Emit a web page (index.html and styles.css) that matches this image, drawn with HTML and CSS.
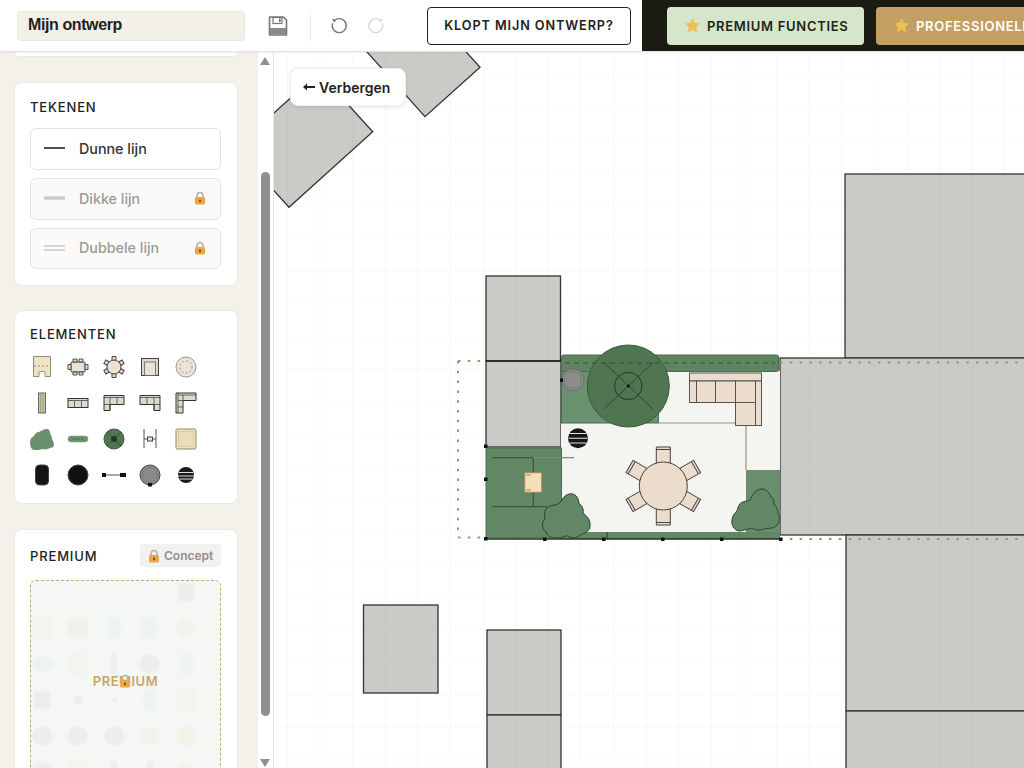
FILE: index.html
```html
<!DOCTYPE html>
<html lang="nl">
<head>
<meta charset="utf-8">
<title>Mijn ontwerp</title>
<link rel="stylesheet" href="styles.css">
</head>
<body>
<svg class="defs" width="0" height="0" aria-hidden="true">
  <defs>
    <symbol id="lock" viewBox="0 0 12 14">
      <path d="M3 7V4.500a3 3 0 0 1 6 0V7" fill="none" stroke="#b9b4aa" stroke-width="1.600"/>
      <rect x="1" y="6" width="10" height="7.500" rx="1.400" fill="#eda54a"/>
      <rect x="5.200" y="8.400" width="1.600" height="2.800" rx=".7" fill="#6b3d16"/>
    </symbol>
    <symbol id="star" viewBox="0 0 16 16">
      <path d="M8 1l2.100 4.500 4.900.7-3.500 3.400.8 4.900L8 12.200l-4.300 2.300.8-4.900L1 6.200l4.900-.7z" fill="#eebf55" stroke="#eebf55" stroke-linejoin="round"/>
    </symbol>
  </defs>
</svg>

<header class="topbar">
  <div class="name-field">Mijn ontwerp</div>
  <button class="icon-btn save" aria-label="Opslaan">
    <svg width="22" height="22" viewBox="0 0 22 22"><path d="M2.500 2h14l3 3v15h-17z" fill="#fff" stroke="#777" stroke-width="1.600" stroke-linejoin="round"/><rect x="6" y="2.500" width="9" height="6" fill="#fff" stroke="#777" stroke-width="1.200"/><rect x="12" y="3.500" width="1.600" height="3.600" fill="#777"/><rect x="3" y="13" width="16" height="6.500" fill="#8a8a8a"/></svg>
  </button>
  <div class="divider"></div>
  <button class="icon-btn undo" aria-label="Ongedaan maken">
    <svg width="20" height="20" viewBox="0 0 20 20"><path d="M6.600 3.600a7 7 0 1 1-3 3.600" fill="none" stroke="#777" stroke-width="1.400"/><path d="M3 3l4.400.2-1.800 3.600z" fill="#777"/></svg>
  </button>
  <button class="icon-btn redo" aria-label="Opnieuw">
    <svg width="20" height="20" viewBox="0 0 20 20"><path d="M13.400 3.600a7 7 0 1 0 3 3.600" fill="none" stroke="#d9d9d9" stroke-width="1.400"/><path d="M17 3l-4.400.2 1.800 3.600z" fill="#d9d9d9"/></svg>
  </button>
  <button class="check-btn">KLOPT MIJN ONTWERP?</button>
  <div class="promo">
    <button class="promo-btn light"><svg class="star"><use href="#star"/></svg>PREMIUM FUNCTIES</button>
    <button class="promo-btn gold"><svg class="star"><use href="#star"/></svg>PROFESSIONELE FUNCTIES</button>
  </div>
</header>

<main class="workspace">
  <aside class="sidebar">
    <section class="card card-clipped"></section>

    <section class="card tools">
      <h2 class="card-title">TEKENEN</h2>
      <div class="tool-row">
        <svg class="line-icon" viewBox="0 0 22 8"><line x1="0" y1="4" x2="21" y2="4" stroke="#111" stroke-width="1.500"/></svg>
        <span>Dunne lijn</span>
      </div>
      <div class="tool-row locked">
        <svg class="line-icon" viewBox="0 0 22 8"><line x1="0" y1="4" x2="21" y2="4" stroke="#c9c9c9" stroke-width="3.400"/></svg>
        <span>Dikke lijn</span>
        <svg class="lock"><use href="#lock"/></svg>
      </div>
      <div class="tool-row locked">
        <svg class="line-icon" viewBox="0 0 22 8"><path d="M0 2h21M0 6h21" stroke="#c9c9c9" stroke-width="1.400"/></svg>
        <span>Dubbele lijn</span>
        <svg class="lock"><use href="#lock"/></svg>
      </div>
    </section>

    <section class="card elements">
      <h2 class="card-title">ELEMENTEN</h2>
      <div class="icon-grid">
        <svg viewBox="0 0 24 24"><path d="M3.500 1.500h17v20h-5.500v-3.500q0-1.500-1.500-1.500h-3q-1.500 0-1.500 1.500v3.500h-5.500z" fill="#f2e2c4" stroke="#8f8f86"/><path d="M4 11h16" stroke="#a08a66" stroke-dasharray="2 2"/></svg>
        <svg viewBox="0 0 24 24"><rect x="5" y="7" width="14" height="10" rx="1" fill="#ece2d4" stroke="#444"/><path d="M7 4h4v3H7zM13 4h4v3h-4zM7 17h4v3H7zM13 17h4v3h-4zM2 9.500h3v5H2zM19 9.500h3v5h-3z" fill="#ddd7ca" stroke="#444" stroke-width=".9"/></svg>
        <svg viewBox="0 0 24 24"><path d="M10 1.500h4v4h-4zM10 18.500h4v4h-4z" fill="#e5ddd0" stroke="#444"/><path d="M10 1.500h4v4h-4zM10 18.500h4v4h-4z" transform="rotate(60 12 12)" fill="#e5ddd0" stroke="#444"/><path d="M10 1.500h4v4h-4zM10 18.500h4v4h-4z" transform="rotate(120 12 12)" fill="#e5ddd0" stroke="#444"/><circle cx="12" cy="12" r="7" fill="#ece2d4" stroke="#444"/></svg>
        <svg viewBox="0 0 24 24"><rect x="3.500" y="3.500" width="17" height="17" fill="#d9d6cb" stroke="#444"/><rect x="6.500" y="7" width="11" height="13.500" fill="#e8e3d8" stroke="#555" stroke-width=".7"/></svg>
        <svg viewBox="0 0 24 24"><circle cx="12" cy="12" r="10" fill="#ece3d6" stroke="#999"/><circle cx="12" cy="12" r="6" fill="none" stroke="#8a7c66" stroke-dasharray="1.500 2.500"/></svg>

        <svg viewBox="0 0 24 24"><rect x="8.500" y="2" width="7" height="20" fill="#c8c8a6" stroke="#666"/><path d="M10.800 2v20M13.200 2v20" stroke="#8a8a6c" stroke-width=".7"/></svg>
        <svg viewBox="0 0 24 24"><rect x="2" y="7.500" width="20" height="9" fill="#ddd9cd" stroke="#333"/><path d="M2 9.500h20M8.500 9.500v7M15.500 9.500v7" stroke="#333" stroke-width=".7"/></svg>
        <svg viewBox="0 0 24 24"><path d="M2 4.500h20v9h-14v6H2z" fill="#ddd9cd" stroke="#333"/><path d="M2 6.500h20M8 6.500v13M15 6.500v7M2 13.500h6" stroke="#333" stroke-width=".7"/></svg>
        <svg viewBox="0 0 24 24"><path d="M2 4.500h20v15h-6v-6H2z" fill="#ddd9cd" stroke="#333"/><path d="M2 6.500h20M16 6.500v13M9 6.500v7M16 13.500h6" stroke="#333" stroke-width=".7"/></svg>
        <svg viewBox="0 0 24 24"><path d="M2 2h20v7.500h-13v12.500H2z" fill="#ddd9cd" stroke="#333"/><path d="M4 2v20M4 4h18M9 4v5.500M4 9.500h5M4 16h5" stroke="#333" stroke-width=".7"/></svg>

        <svg viewBox="0 0 24 24"><path d="M0 15c0-3 2-5 4-6 1-2 2-4 5-4 2-1 5-3 8-3 2 0 3 2 3 4 1 2 2 4 2 6 1 2 2 4 2 6 0 2-2 3-4 3-2 1-5 2-7 1-3 1-6 1-8 1-3 0-5-2-5-8z" fill="#6c8f70"/></svg>
        <svg viewBox="0 0 24 24"><rect x="2" y="9" width="20" height="6" rx="3" fill="#6c8f70" stroke="#8aa48c" stroke-width=".6"/><path d="M6 12h12" stroke="#4c6a50" stroke-dasharray="2 1"/></svg>
        <svg viewBox="0 0 24 24"><circle cx="12" cy="12" r="10" fill="#4f7551" stroke="#3a5a3d"/><path d="M5 5l14 14M19 5L5 19" stroke="#2f4a33" stroke-width=".8"/><circle cx="12" cy="12" r="3" fill="#1e3a24"/></svg>
        <svg viewBox="0 0 24 24"><path d="M6 2v19M18 2v19M6 12h3M15 12h3" stroke="#555"/><rect x="9.500" y="10" width="5" height="4" fill="#ece2d4" stroke="#444"/></svg>
        <svg viewBox="0 0 24 24"><rect x="2" y="2" width="20" height="20" rx="1.500" fill="#f2e2c4" stroke="#8f8a62"/><rect x="4.500" y="4.500" width="15" height="15" fill="#eedcb6" stroke="#c8c09a" stroke-width=".6"/></svg>

        <svg viewBox="0 0 24 24"><rect x="5.500" y="2" width="13" height="20" rx="4" fill="#151515" stroke="#444"/></svg>
        <svg viewBox="0 0 24 24"><circle cx="12" cy="12" r="10" fill="#111" stroke="#444" stroke-width="1"/></svg>
        <svg viewBox="0 0 24 24"><path d="M2 12h20" stroke="#555"/><rect x="0" y="10" width="4" height="4" fill="#111"/><rect x="18" y="10" width="6" height="4" fill="#111"/></svg>
        <svg viewBox="0 0 24 24"><circle cx="12" cy="12" r="10" fill="#8a8a8a" stroke="#444"/><circle cx="12" cy="12" r="7.500" fill="none" stroke="#555" stroke-dasharray="1.500 1.500" stroke-width=".7"/><rect x="10" y="20" width="4" height="3.500" fill="#111"/></svg>
        <svg viewBox="0 0 24 24"><circle cx="12" cy="12" r="8" fill="#1a1a1a"/><path d="M4.500 9.500h15M4 13h16M5.500 16h13" stroke="#ddd" stroke-width="1"/></svg>
      </div>
    </section>

    <section class="card premium">
      <div class="premium-head">
        <h2 class="card-title">PREMIUM</h2>
        <div class="badge"><svg class="lock"><use href="#lock"/></svg>Concept</div>
      </div>
      <div class="premium-box">
        <div class="ghost-grid">
          <i class="g-empty"></i><i class="g-empty"></i><i class="g-empty"></i><i class="g-empty"></i><i class="g-win"></i>
          <i class="g-sq"></i><i class="g-sq g-olive"></i><i class="g-tall"></i><i class="g-tall g-teal"></i><i class="g-round"></i>
          <i class="g-blob"></i><i class="g-sq"></i><i class="g-thin"></i><i class="g-round g-dark"></i><i class="g-tall"></i>
          <i class="g-win"></i><i class="g-dot"></i><i class="g-dot g-small"></i><i class="g-tall"></i><i class="g-sq"></i>
          <i class="g-round g-dark"></i><i class="g-round g-dark"></i><i class="g-round g-dark"></i><i class="g-round"></i><i class="g-round g-yellow"></i>
          <i class="g-round g-dark"></i><i class="g-sq"></i><i class="g-thin"></i><i class="g-thin"></i><i class="g-round"></i>
        </div>
        <div class="premium-label">PREMIUM<svg class="lock"><use href="#lock"/></svg></div>
      </div>
    </section>
  </aside>

  <div class="scrollbar">
    <span class="arrow up"></span>
    <span class="thumb"></span>
    <span class="arrow down"></span>
  </div>

  <div class="canvas">
    <svg class="plan" viewBox="274 52 750 716">
      <defs>
        <pattern id="grid" x="287" y="75" width="32.6" height="32.6" patternUnits="userSpaceOnUse">
          <path d="M0 32.600V0H32.600" fill="none" stroke="#54543c" stroke-opacity=".07" stroke-width="1.200"/>
        </pattern>
        <g id="chair">
          <path d="M-7 -39h14v16h-14z" fill="#ecdccb" stroke="#444" stroke-width="1"/>
          <path d="M-7 -36.500h14" stroke="#444" stroke-width="1"/>
        </g>
      </defs>

      <g class="house">
        <polygon points="319,72.500 372.700,131.700 289,207.300 235,148"/>
        <polygon points="480,67.300 425,116.700 350,33 405,-16"/>
        <rect x="845" y="174" width="200" height="184"/>
        <rect x="780" y="358" width="260" height="177"/>
        <rect x="846" y="535" width="200" height="176"/>
        <rect x="846" y="711" width="200" height="80"/>
        <rect x="486" y="276" width="74.500" height="85"/>
        <rect x="486" y="361" width="75" height="86"/>
        <rect x="363.500" y="605" width="74.500" height="88"/>
        <rect x="487" y="630" width="74" height="85"/>
        <rect x="487" y="715" width="74" height="70"/>
      </g>

      <rect x="274" y="52" width="750" height="716" fill="url(#grid)"/>

      <rect x="561" y="371" width="219" height="163" fill="#f4f5f1"/>
      <rect x="561.500" y="371" width="97" height="52" fill="#6a9170" stroke="#4d6b50"/>
      <rect x="746" y="470" width="34" height="64" fill="#6a8d6b"/>
      <path d="M658 423h77M746 425v45" stroke="#8f918c" stroke-width="1.200" fill="none"/>
      <rect x="561.500" y="355" width="217" height="16.500" rx="2" fill="#5f8560" stroke="#4d6b50"/>
      <rect x="486" y="448" width="75.500" height="90" fill="#628764" stroke="#4d6b50"/>
      <rect x="561" y="532" width="219" height="7" fill="#628764"/>
      <path d="M607 532v7" stroke="#333" stroke-width="1"/>
      <path d="M486 539H780" stroke="#26301f" stroke-width="1.400"/>
      <path d="M492 457.700h41" stroke="#3d5640" stroke-width="1.200"/>
      <path d="M533 457.700h41" stroke="#7c8a7c" stroke-width="1.200"/>
      <path d="M492 506.700h55M533.300 457.700v49" stroke="#3d5640" stroke-width="1.200"/>
      <rect x="524.700" y="472.700" width="17" height="19.600" fill="#f5dfb5" stroke="#998a68"/>
      <path d="M526 475h5M526 490h5" stroke="#a08a66"/>

      <g class="sofa">
        <rect x="689.500" y="373" width="72" height="8"/>
        <rect x="689.500" y="381" width="7" height="21.500"/>
        <rect x="696.500" y="381" width="19" height="21.500"/>
        <rect x="715.500" y="381" width="20" height="21.500"/>
        <rect x="735.500" y="381" width="20" height="21.500"/>
        <rect x="735.500" y="402.500" width="20" height="23"/>
        <rect x="755.500" y="381" width="6" height="44.500"/>
      </g>

      <circle cx="628.300" cy="386" r="41" fill="#4f7551" stroke="#3a5a3d"/>
      <circle cx="628.300" cy="386" r="13.700" fill="none" stroke="#233a28"/>
      <path d="M604 362.700L653 409M653 362.700L604 409" stroke="#2c4631"/>
      <circle cx="628.300" cy="386" r="1.600" fill="#111"/>

      <circle cx="573" cy="380" r="11" fill="#8c8c8a" stroke="#6b6f6a"/>
      <circle cx="573" cy="380" r="8.500" fill="none" stroke="#555" stroke-width=".7" stroke-dasharray="1.500 1.500"/>

      <circle cx="578" cy="438.300" r="10" fill="#17171a"/>
      <path d="M569.500 433.500h17M568.500 438.300h19M569.500 443h17" stroke="#e5e5e5" stroke-width="1.100"/>

      <g transform="translate(663.300 486)">
        <use href="#chair"/>
        <use href="#chair" transform="rotate(60)"/>
        <use href="#chair" transform="rotate(120)"/>
        <use href="#chair" transform="rotate(180)"/>
        <use href="#chair" transform="rotate(240)"/>
        <use href="#chair" transform="rotate(300)"/>
        <circle r="24" fill="#ecdccb" stroke="#444"/>
      </g>

      <path class="bush" d="M546 532c-4-3-5-9-1-13 0-2-1-6 0-8 2-5 7-6 11-6 2-1 5-3 6-5 2-5 9-8 13-5 3 2 4 6 4 9 3 1 5 5 4 9 2 2 7 5 7 11 1 6-4 9-8 10-3 2-6 4-8 4-4 0-6-3-8-2-3 1-6 2-8 2-4 0-10 0-12-6z"/>
      <path class="bush" d="M739 531c-5-1-8-6-7-11 0-4 3-7 5-9 1-4 2-8 6-9 3-1 5-1 7-2 2-5 6-11 12-11 5 0 8 5 9 8 3 1 3 5 3 7 3 4 4 6 4 9 2 4 2 10-2 13-3 3-9 2-12 3-5 2-9 1-12-1-4 1-10 3-13 3z"/>

      <g class="plot">
        <path d="M458 361H486M458 361V537M458 537.500H486M780 539H1024"/>
        <path d="M780 362.500H1024"/>
      </g>
      <path d="M486 361H561" stroke="#222" stroke-width="1.400"/>
      <path d="M565 363H775" stroke="#2c4631" stroke-dasharray="5 4" stroke-width=".8"/>

      <g fill="#111">
        <rect x="484" y="444.500" width="3.500" height="3.500"/>
        <rect x="484" y="477.500" width="3.500" height="3.500"/>
        <rect x="484" y="537" width="3.500" height="3.500"/>
        <rect x="543" y="537.500" width="3.500" height="3.500"/>
        <rect x="602" y="537.500" width="3.500" height="3.500"/>
        <rect x="661" y="537.500" width="3.500" height="3.500"/>
        <rect x="720" y="537.500" width="3.500" height="3.500"/>
        <rect x="779" y="537.500" width="3.500" height="3.500"/>
        <rect x="560" y="378.500" width="3" height="3.500"/>
      </g>
    </svg>

    <button class="hide-btn">
      <svg width="12" height="8" viewBox="0 0 12 8"><path d="M0 4l4-3.500v2.500h8v2H4v2.500z" fill="#222"/></svg>
      Verbergen
    </button>
  </div>
</main>
</body>
</html>
```

FILE: styles.css
```css
* { box-sizing: border-box; }

html, body {
  margin: 0;
  height: 100%;
  overflow: hidden;
  background: #fff;
  font-family: Inter, "Liberation Sans", sans-serif;
  color: #222;
}

.defs { position: absolute; }

button {
  font-family: inherit;
  cursor: pointer;
}

.topbar {
  position: relative;
  z-index: 2;
  display: flex;
  align-items: center;
  height: 52px;
  padding-left: 17px;
  background: #fff;
  border-bottom: 1px solid #e4e4e2;
  box-shadow: 0 1px 2px rgba(0, 0, 0, .06);
}

.name-field {
  width: 228px;
  height: 30px;
  padding: 0 10px;
  line-height: 26px;
  font-family: "Liberation Sans", sans-serif;
  font-size: 16px;
  font-weight: 700;
  letter-spacing: -.4px;
  color: #222;
  background: #f3f0e8;
  border: 1px solid #ebe8dd;
  border-radius: 4px;
}

.icon-btn {
  display: flex;
  align-items: center;
  justify-content: center;
  padding: 0;
  background: none;
  border: 0;
}

.save { width: 22px; height: 22px; margin-left: 22px; }

.divider {
  width: 1px;
  height: 32px;
  margin-left: 21px;
  background: #ececea;
}

.undo { width: 20px; height: 20px; margin-left: 18px; }
.redo { width: 20px; height: 20px; margin-left: 17px; }

.check-btn {
  width: 204px;
  height: 38px;
  margin-left: 41px;
  padding: 0;
  font-size: 12.700px;
  font-weight: 600;
  letter-spacing: .9px;
  color: #222;
  background: #fff;
  border: 1px solid #222;
  border-radius: 4px;
}

.promo {
  display: flex;
  flex: 1;
  align-items: center;
  gap: 12px;
  height: 51px;
  margin-left: 11px;
  padding-left: 25px;
  overflow: hidden;
  background: #1a1c12;
}

.promo-btn {
  display: flex;
  flex: none;
  align-items: center;
  gap: 7px;
  height: 38px;
  padding: 0 0 0 18px;
  font-size: 13px;
  font-weight: 600;
  letter-spacing: .7px;
  white-space: nowrap;
  border: 0;
  border-radius: 4px;
}

.light { width: 197px; color: #1e2416; background: #d5e6cb; }
.gold { width: 240px; padding-left: 18px; color: #fff; background: #c49f64; }

.star { flex: none; width: 15px; height: 15px; }

.workspace {
  display: flex;
  height: 716px;
}

.sidebar {
  display: flex;
  flex: none;
  flex-direction: column;
  width: 258px;
  height: 716px;
  padding: 0 20px 0 14px;
  overflow: hidden;
  background: #f4f1ea;
}

.card {
  flex: none;
  margin-bottom: 25px;
  padding: 15px 16px 15px 15px;
  background: #fff;
  border: 1px solid #ebe9e2;
  border-radius: 8px;
}

.card-clipped {
  height: 5px;
  padding: 0;
  border-top: 0;
  border-radius: 0 0 8px 8px;
}

.card-title {
  margin: 0;
  font-size: 13px;
  font-weight: 500;
  line-height: 18px;
  letter-spacing: .85px;
  color: #222;
}

.tools { height: 204px; margin-bottom: 24px; }
.tools .card-title { margin-bottom: 12px; }

.tool-row {
  display: flex;
  align-items: center;
  height: 42px;
  margin-bottom: 8px;
  padding: 0 14px 2px 13px;
  font-size: 14.300px;
  font-weight: 500;
  color: #333;
  background: #fff;
  border: 1px solid #e3e3df;
  border-radius: 6px;
}

.tool-row:last-child { margin-bottom: 0; }

.tool-row.locked {
  height: 41.500px;
  padding-bottom: 1px;
  color: #9a9a98;
  background: #fbfaf8;
}

.line-icon {
  flex: none;
  width: 22px;
  height: 8px;
  margin-right: 13px;
}

.tool-row .lock { margin-left: auto; }

.lock {
  flex: none;
  width: 12px;
  height: 14px;
}

.elements { height: 194px; padding-top: 14px; }
.elements .card-title { margin-bottom: 6px; }

.icon-grid {
  display: grid;
  grid-template-columns: repeat(5, 36px);
  grid-auto-rows: 36px;
  margin-left: -6px;
  place-items: center;
}

.icon-grid svg { width: 24px; height: 24px; }

.premium { padding-top: 14px; padding-bottom: 0; height: 300px; }

.premium-head {
  display: flex;
  align-items: center;
  justify-content: space-between;
  height: 23px;
  margin-bottom: 13px;
}

.badge {
  display: flex;
  align-items: center;
  gap: 4px;
  width: 81px;
  height: 23px;
  padding-left: 8px;
  font-size: 12px;
  font-weight: 600;
  color: #8f8f8d;
  background: #f1f1ef;
  border-radius: 4px;
}

.premium-box {
  position: relative;
  height: 240px;
  overflow: hidden;
  background: #f4f7f4;
  border: 1px dashed #b5ad7a;
  border-radius: 6px;
}

.ghost-grid {
  display: grid;
  grid-template-columns: repeat(5, 36px);
  grid-auto-rows: 36px;
  margin: -7px 0 0 -7px;
  place-items: center;
  opacity: .05;
  filter: blur(1px);
}

.ghost-grid i { display: block; }

.g-sq { width: 20px; height: 20px; background: #c9c79a; }
.g-olive { background: #8c8a40; }
.g-tall { width: 14px; height: 20px; background: #b0b8b0; }
.g-teal { background: #6da6a6; }
.g-round { width: 20px; height: 20px; border-radius: 50%; background: #b9b98a; }
.g-dark { background: #555; }
.g-yellow { background: #c0b430; }
.g-blob { width: 20px; height: 16px; border-radius: 50%; background: #5da0b0; }
.g-thin { width: 6px; height: 20px; background: #555; }
.g-dot { width: 8px; height: 8px; background: #333; }
.g-small { width: 5px; height: 3px; }
.g-win { width: 16px; height: 18px; background: #444; }

.premium-label {
  position: absolute;
  top: 91px;
  left: 0;
  right: 0;
  display: flex;
  justify-content: center;
  font-size: 13px;
  font-weight: 600;
  line-height: 18px;
  letter-spacing: .5px;
  color: #c9a468;
}

.premium-label .lock {
  position: absolute;
  top: 2px;
  left: 88px;
}

.scrollbar {
  display: flex;
  flex: none;
  flex-direction: column;
  align-items: center;
  width: 16px;
  padding-right: 1px;
  background: #fff;
  border-right: 1px solid #e4e4e2;
}

.arrow {
  width: 0;
  height: 0;
  border-left: 5px solid transparent;
  border-right: 5px solid transparent;
}

.arrow.up {
  margin-top: 5px;
  border-bottom: 8px solid #8f8f8f;
}

.arrow.down {
  margin-top: 43px;
  border-top: 8px solid #8f8f8f;
}

.thumb {
  width: 9px;
  height: 544px;
  margin-top: 107px;
  background: #8f8f8f;
  border-radius: 5px;
}

.canvas {
  position: relative;
  flex: 1;
  overflow: hidden;
  background: #fff;
}

.plan {
  display: block;
  width: 750px;
  height: 716px;
}

.house rect, .house polygon {
  fill: #c9ccc6;
  stroke: #333;
  stroke-width: 1.300;
}

.sofa rect {
  fill: #ecdccb;
  stroke: #555;
  stroke-width: 1;
}

.bush {
  fill: #628764;
  stroke: #2a4430;
  stroke-width: 1;
}

.plot path {
  fill: none;
  stroke: #9c9668;
  stroke-width: 2;
  stroke-dasharray: 2.500 7.300;
}

.hide-btn {
  position: absolute;
  top: 16px;
  left: 16px;
  display: flex;
  align-items: center;
  gap: 4px;
  width: 116px;
  height: 38px;
  padding: 0 0 0 12px;
  font-size: 14px;
  font-weight: 600;
  color: #222;
  background: #fff;
  border: 1px solid #f0f0ee;
  border-radius: 8px;
  box-shadow: 0 1px 4px rgba(0, 0, 0, .1);
}
```
